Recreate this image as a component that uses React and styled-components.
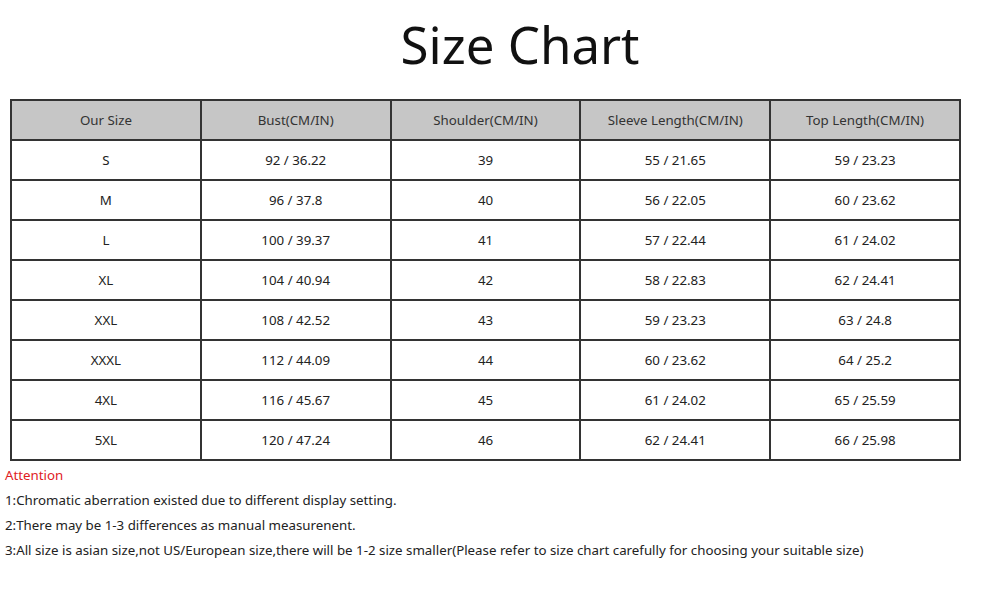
import { createGlobalStyle, styled } from 'styled-components'

const GlobalStyle = createGlobalStyle`
    body {
        margin: 0;
        background: #ffffff;
        font-family: "Noto Sans", "Open Sans", sans-serif;
        color: #222;
    }
`

const Page = styled.div`
    width: 1000px;
    height: 590px;
    overflow: hidden;
`

const Title = styled.h1`
    margin: 0;
    padding: 11px 0 0 40px;
    height: 99px;
    box-sizing: border-box;
    text-align: center;
    font-family: "Noto Sans", sans-serif;
    font-weight: 400;
    font-size: 51px;
    line-height: 66px;
    color: #111;
`

const Table = styled.table`
    margin-left: 10px;
    width: 951px;
    border-collapse: collapse;
    table-layout: fixed;
`

const Cell = styled.td`
    height: 38px;
    padding: 0;
    border: 2px solid #333;
    text-align: center;
    font-size: 13.3px;
    font-weight: 400;
    color: ${p => (p.$head ? '#333' : '#222')};
    background: ${p => (p.$head ? '#c6c6c6' : '#fff')};
`

const Notes = styled.div`
    padding: 2px 0 0 5px;
    font-size: 13.3px;
    line-height: 25px;
    color: #222;
`

const Attention = styled.div`
    color: #e0201e;
`

const headers = ['Our Size', 'Bust(CM/IN)', 'Shoulder(CM/IN)', 'Sleeve Length(CM/IN)', 'Top Length(CM/IN)']

const rows = [
    ['S', '92 / 36.22', '39', '55 / 21.65', '59 / 23.23'],
    ['M', '96 / 37.8', '40', '56 / 22.05', '60 / 23.62'],
    ['L', '100 / 39.37', '41', '57 / 22.44', '61 / 24.02'],
    ['XL', '104 / 40.94', '42', '58 / 22.83', '62 / 24.41'],
    ['XXL', '108 / 42.52', '43', '59 / 23.23', '63 / 24.8'],
    ['XXXL', '112 / 44.09', '44', '60 / 23.62', '64 / 25.2'],
    ['4XL', '116 / 45.67', '45', '61 / 24.02', '65 / 25.59'],
    ['5XL', '120 / 47.24', '46', '62 / 24.41', '66 / 25.98'],
]

const App = () => {
    return (
        <Page>
            <GlobalStyle />
            <Title>Size Chart</Title>
            <Table>
                <thead>
                    <tr>
                        {headers.map(h => <Cell as="th" $head key={h}>{h}</Cell>)}
                    </tr>
                </thead>
                <tbody>
                    {rows.map(r => (
                        <tr key={r[0]}>
                            {r.map((v, i) => <Cell key={i}>{v}</Cell>)}
                        </tr>
                    ))}
                </tbody>
            </Table>
            <Notes>
                <Attention>Attention</Attention>
                <div>1:Chromatic aberration existed due to different display setting.</div>
                <div>2:There may be 1-3 differences as manual measurenent.</div>
                <div>3:All size is asian size,not US/European size,there will be 1-2 size smaller(Please refer to size chart carefully for choosing your suitable size)</div>
            </Notes>
        </Page>
    )
}

export default App
